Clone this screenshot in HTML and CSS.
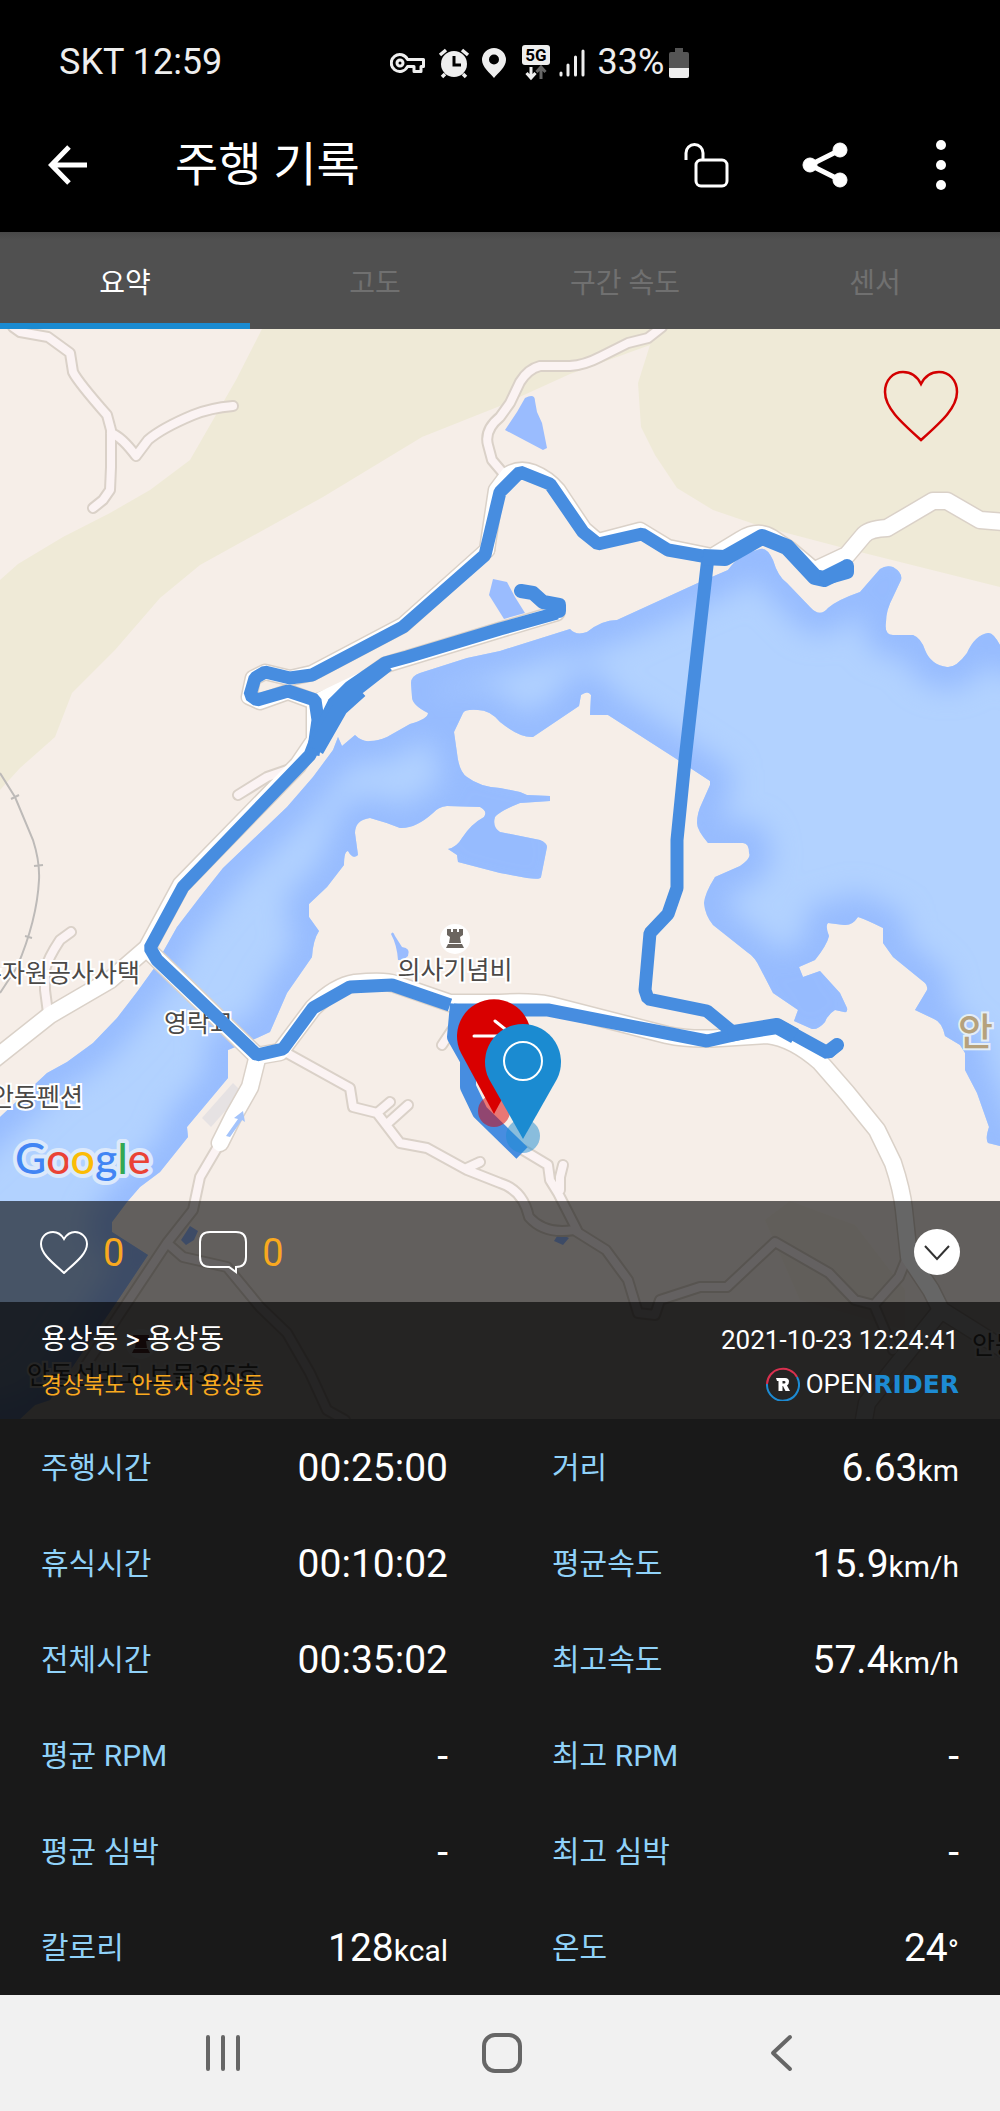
FILE: index.html
```html
<!DOCTYPE html>
<html lang="ko">
<head>
<meta charset="utf-8">
<meta name="viewport" content="width=device-width, initial-scale=1">
<title>주행 기록</title>
<link rel="stylesheet" href="styles.css">
</head>
<body>
<div class="status">
  <span class="carrier">SKT 12:59</span>
  <div class="status-icons">
    <svg width="36" height="24" viewBox="0 0 36 24" fill="none" stroke="#eee" stroke-width="3"><path d="M17.500 8.500H33.500V15.500H31V20.500H24V15.500H17.500A8.500 8.500 0 1 1 17.500 8.500Z" stroke-linejoin="round"/><circle cx="10" cy="12" r="3"/></svg>
    <svg width="32" height="32" viewBox="0 0 32 32"><circle cx="16" cy="17" r="13" fill="#eee"/><path d="M2 8L8 3M30 8L24 3M7 27L4 30M25 27L28 30" stroke="#eee" stroke-width="3.500"/><path d="M16 9V18H23" fill="none" stroke="#000" stroke-width="3"/></svg>
    <svg class="pin-icon" width="24" height="30" viewBox="0 0 24 30"><path fill="#eee" fill-rule="evenodd" d="M12 0A12 12 0 0 1 24 12C24 19 16 25 12 30C8 25 0 19 0 12A12 12 0 0 1 12 0ZM12 6.500A5 5 0 1 0 12 16.500A5 5 0 1 0 12 6.500Z"/></svg>
    <svg class="net-icon" width="28" height="36" viewBox="0 0 28 36"><rect width="28" height="20" rx="3" fill="#eee"/><text x="14" y="16" text-anchor="middle" class="net-text">5G</text><path d="M9 22V32M4.500 28L9 33L13.500 28" fill="none" stroke="#eee" stroke-width="3"/><path d="M19 34V24M14.500 27L19 22L23.500 27" fill="none" stroke="#666" stroke-width="3"/></svg>
    <svg width="28" height="30" viewBox="0 0 28 30" stroke="#eee" stroke-width="3" stroke-linecap="round"><path d="M3 27V25M10 27V17M17.500 27V9M25 27V3"/></svg>
    <span class="battery-text">33%</span>
    <svg width="20" height="30" viewBox="0 0 20 30"><path d="M6 0H14V4H18Q20 4 20 6V20H0V6Q0 4 2 4H6Z" fill="#555"/><path d="M0 20H20V28Q20 30 18 30H2Q0 30 0 28Z" fill="#eee"/></svg>
  </div>
</div>

<header class="appbar">
  <button class="icon-btn" aria-label="뒤로"><svg width="40" height="40" viewBox="0 0 40 40" fill="none" stroke="#fff" stroke-width="5"><path d="M39 20H4M21 2L3.500 20L21 38"/></svg></button>
  <h1>주행 기록</h1>
  <button class="icon-btn" aria-label="잠금 해제"><svg width="46" height="46" viewBox="0 0 46 46" fill="none" stroke="#fff" stroke-width="3"><rect x="12" y="18" width="31" height="26" rx="5"/><path d="M2 18V11A8.500 8.500 0 0 1 19 11V18"/></svg></button>
  <button class="icon-btn" aria-label="공유"><svg width="46" height="46" viewBox="0 0 46 46" fill="#fff" stroke="#fff"><path d="M38 8L8 23L38 38" fill="none" stroke-width="5"/><circle cx="8" cy="23" r="7"/><circle cx="38" cy="8" r="7"/><circle cx="38" cy="38" r="7"/></svg></button>
  <button class="icon-btn" aria-label="더보기"><svg width="10" height="50" viewBox="0 0 10 50" fill="#fff"><circle cx="5" cy="5" r="5"/><circle cx="5" cy="25" r="5"/><circle cx="5" cy="45" r="5"/></svg></button>
</header>

<nav class="tabs" role="tablist">
  <button class="tab active" role="tab" aria-selected="true">요약</button>
  <button class="tab" role="tab" aria-selected="false">고도</button>
  <button class="tab" role="tab" aria-selected="false">구간 속도</button>
  <button class="tab" role="tab" aria-selected="false">센서</button>
</nav>

<main>
<section class="map">
  <svg class="map-canvas" viewBox="0 329 1000 1090">
    <defs>
      <path id="lake" d="M-80 1190L0 1117L47 1073L67 1062L93 1043L117 1018L137 992L155 967L163 952L177 927L200 897L223 868L287 807L313 777L333 750L338 737L342 746L355 735Q362 742 370 741Q378 741 387 737L410 724Q428 719 428 713Q412 705 412 697L411 683Q411 676 420 673L467 658L500 651L570 629Q576 636 587 632Q602 620 617 620L700 582L728 570Q738 555 760 549Q767 547 773 560Q778 577 787 583L810 607Q820 618 828 608Q837 600 860 592L880 569Q886 565 893 567Q903 573 901 580L893 597Q886 610 886 622Q884 635 893 635L913 635Q921 638 925 650Q931 665 947 667Q956 668 967 653Q975 635 988 633Q993 632 1000 645L1100 700V1180L1000 1146L988 1143Q985 1139 989 1127L977 1093L965 1070V1053L960 1045L945 1036Q942 1022 934 1019L915 1010L927 990Q928 986 925 983L893 957L883 943V928Q867 920 858 917Q852 926 844 925L828 923Q825 926 829 936Q827 945 815 960L799 967L803 977L820 971L840 993L847 1008Q848 1013 844 1012L835 1010Q828 1014 825 1022Q818 1030 812 1029L794 1021L798 1010L773 993L760 968Q755 957 747 952L713 925Q705 915 704 903Q705 893 715 877L740 866Q752 858 749 853Q749 843 743 843H708Q697 830 697 823Q697 813 702 803L710 785V781L678 760L608 715H590L591 695Q588 690 581 695L579 706L533 737Q520 738 500 722Q490 710 478 710Q465 709 463 713L454 732L457 753Q459 772 467 777Q480 787 500 788L520 792L527 795L550 796V801L520 803Q500 811 495 817Q492 827 500 832L540 840Q547 843 547 847L541 877Q541 880 527 878L500 873L458 862L457 855L448 849Q457 847 462 838Q471 824 484 817Q488 811 480 807L447 806Q438 807 433 813Q415 829 400 828Q385 822 370 818Q355 820 355 833L358 855Q353 860 348 851Q344 851 344 865L327 887L309 904V917L319 931Q313 940 312 957L287 993L270 1032L257 1038L228 1050V1078L187 1127L188 1137L160 1172L140 1187L127 1202L112 1222V1232L148 1255L120 1297L86 1347L50 1400L35 1405L20 1419H-80Z"/>
      <clipPath id="lake-clip"><use href="#lake"/></clipPath>
      <filter id="soft" x="-10%" y="-10%" width="120%" height="120%"><feGaussianBlur stdDeviation="14"/></filter>
      <g id="lanes">
        <path d="M13 327L20 332L48 337L70 353L73 372Q78 382 107 415L111 430V467L110 490L103 500L93 508M111 433Q122 437 136 456L148 440Q162 428 193 415Q210 408 233 406"/>
        <path d="M662 327L648 338L628 343L600 357Q585 365 570 366H540Q528 369 520 382L510 403L500 417Q484 430 488 445L492 460L503 473"/>
        <path d="M48 1013L45 990V970Q48 958 60 940L71 932M238 795L267 777L293 768M442 1045L452 1030"/>
        <path d="M220 1143L200 1177L193 1210L167 1243L127 1303L86 1365M167 1243L183 1257L227 1267L260 1307L287 1333L310 1373L327 1410L345 1420"/>
        <path d="M285 1052L350 1088L353 1107L377 1113L400 1143L427 1148L467 1170L500 1183Q523 1190 529 1217Q545 1235 574 1230L606 1250L628 1280L638 1313L655 1315L660 1300L700 1287H727L775 1242L829 1273L855 1300L874 1305L899 1277L908 1255M874 1305L886 1333L893 1350M377 1113L390 1102M388 1123L408 1105M467 1168L480 1162"/>
        <path d="M523 1150L548 1165L550 1180L558 1193L577 1230M560 1190V1177L563 1165"/>
      </g>
      <g id="route-roads">
        <path d="M487 550L496 490L508 474Q520 467 533 472Q548 478 558 490L584 529L598 541L640 530L668 547L712 556L740 539Q758 528 772 537L790 549L815 570"/>
        <path d="M487 550L403 625L312 673L290 678L265 672L253 678L249 697L260 702L288 692L315 702L350 690L385 665L500 630L557 613"/>
      </g>
      <g id="roads">
        <path d="M815 570L847 555L863 536Q868 529 887 528L933 501H947L980 520L1005 522"/>
        <path d="M315 705V740L298 765L181 885L147 948L110 980L50 1015L-8 1061M150 952L257 1056L280 1052L313 1008Q335 986 355 983Q385 980 395 984L450 1003H500Q530 1001 550 1005L667 1035Q690 1040 720 1038L767 1035Q793 1038 820 1062L847 1093L877 1130L893 1163Q902 1190 904 1210L909 1257L931 1290L941 1310L893 1370L867 1403L863 1425M941 1310L957 1320L1005 1350"/>
        <path d="M258 1055L250 1087L233 1117L220 1143"/>
      </g>
    </defs>

    <rect y="329" width="1000" height="1090" fill="#f6eee8"/>
    <g fill="#efead7">
      <path d="M262 329L236 380L213 420L190 460L150 490L110 513L63 537L18 564L0 580V790L20 768L55 737L72 693L115 650L160 598L200 565L323 497L422 437L500 406L570 374L650 345L660 329Z"/>
      <path d="M655 329L650 345L638 383L641 427L655 455L677 488L713 510L760 526L840 547L1000 587V329Z"/>
    </g>
    <path d="M790 1201L855 1225L905 1290V1330L800 1300L765 1220Z" fill="#f3ece1"/>
    <g fill="#9abcfe">
      <path d="M505 430L517 412L525 398Q535 393 535 401L537 412L542 423L547 448L543 450Z"/>
      <path d="M493 579L489 595L504 619L525 613L515 597L507 582Z"/>
      <path d="M391 934Q393 930 395 936L402 947Q411 948 408 956L403 960H398Q397 945 391 934Z"/>
      <path d="M190 1226L198 1231L194 1240L186 1245L181 1240ZM559 1233L569 1238L563 1245L554 1241Z"/>
    </g>
    <use href="#lake" fill="#b2d2ff"/>
    <g clip-path="url(#lake-clip)"><use href="#lake" fill="none" stroke="#96bbfe" stroke-width="44" filter="url(#soft)"/></g>
    <path d="M202 1118L233 1083L242 1092L211 1127Z" fill="#e6e2e3"/>

    <g fill="none" stroke="#bdbab8" stroke-width="2"><path d="M0 773L15 797L33 840Q40 862 39 880Q37 920 17 967L0 993M11 799L19 795M34 866L43 865M25 936L32 938"/></g>
    <g fill="none" stroke-linejoin="round" stroke-linecap="round">
      <use href="#lanes" stroke="#dad1c8" stroke-width="12"/>
      <use href="#route-roads" stroke="#dad1c8" stroke-width="17"/>
      <use href="#roads" stroke="#dad1c8" stroke-width="19"/>
      <use href="#lanes" stroke="#fbf3f3" stroke-width="8"/>
      <use href="#route-roads" stroke="#fff" stroke-width="14"/>
      <use href="#roads" stroke="#fff" stroke-width="16"/>
    </g>
    <path d="M315 694L365 670L345 700L325 720Z" fill="#fff"/>
    <path d="M226 1136L238 1119L234 1118L243 1111L245 1122L242 1120L230 1137Z" fill="#a4c4fb"/>

    <g class="place">
      <text x="140" y="982" text-anchor="end">수자원공사사택</text>
      <text x="164" y="1032">영락교</text>
      <text x="83" y="1106" text-anchor="end">안동펜션</text>
      <text x="455" y="979" text-anchor="middle">의사기념비</text>
      <text x="27" y="1384">안동선비고 보물305호</text>
      <text x="972" y="1354">안동</text>
    </g>
    <text class="region" x="958" y="1045">안</text>
    <g><circle cx="455" cy="939" r="15" fill="#fff"/><path fill="#6b655f" d="M447 929H451V932H453V929H457V932H459V929H463V935L460 937L461 943H449L450 937L447 935ZM448 944H462L464 948H446Z"/></g>
    <g><circle cx="141" cy="1344" r="15" fill="#fff"/><path fill="#743b35" d="M133 1335H149V1341H146L147 1348H135L136 1341H133ZM134 1349H148L150 1353H132Z"/></g>

    <g fill="none" stroke="#478de0" stroke-width="13" stroke-linejoin="bevel">
      <path d="M708 557L668 550L642 534L598 544L583 532L550 484L520 472L500 492L485 555L403 627L312 675L290 678L265 672L255 678L250 695L257 700L288 691L315 700L318 720L313 755"/>
      <path d="M557 613L500 629L407 657L385 663L350 687L334 703L317 737L310 755L183 887L150 948L157 960L257 1055L283 1049L313 1008L350 987L392 985L450 1005"/>
      <path d="M454 1010H548L707 1041L777 1025L828 1053L837 1045"/>
      <path d="M735 1034L707 1011L648 999L645 990L650 933L668 914L677 888V840L685 760L708 557"/>
    </g>
    <g fill="none" stroke="#478de0" stroke-width="16" stroke-linejoin="round">
      <path d="M703 557L725 558L762 537L787 547L815 577L824 579L846 568"/>
      <path d="M333 706L350 693L387 664M316 750L340 708L360 690"/>
      <path d="M458 1004L455 1037L468 1060V1087L480 1112L522 1153"/>
      <path d="M728 1034L777 1026L795 1036"/>
    </g>
    <g fill="none" stroke="#478de0" stroke-width="14" stroke-linecap="round" stroke-linejoin="round"><path d="M521 591L533 593L543 602L559 605V611M826 578L847 572V566M829 1051L837 1045"/></g>

    <circle cx="494" cy="1111" r="16" fill="#dc0000" opacity=".5"/>
    <path d="M494 1114L461 1053A37 37 0 1 1 527 1053Z" fill="#d90000"/>
    <path d="M474 1036H514L495 1021" fill="none" stroke="#fff" stroke-width="3" stroke-linecap="round"/>
    <circle cx="523" cy="1136" r="17" fill="#1b8bd1" opacity=".5"/>
    <path d="M523 1139L489 1079A38 38 0 1 1 557 1079Z" fill="#1b8bd1"/>
    <circle cx="523" cy="1061" r="19" fill="none" stroke="#fff" stroke-width="2"/>

    <text class="google" x="15" y="1174"><tspan fill="#4285f4">G</tspan><tspan fill="#ea4335">o</tspan><tspan fill="#fbbc05">o</tspan><tspan fill="#4285f4">g</tspan><tspan fill="#34a853">l</tspan><tspan fill="#ea4335">e</tspan></text>
  </svg>

  <button class="icon-btn favorite" aria-label="즐겨찾기"><svg width="76" height="72" viewBox="0 0 76 72" fill="none" stroke="#d30000" stroke-width="2.500"><path d="M38 14C34 6 27 2 20 2C10 2 2 10 2 22C2 38 18 52 38 70C58 52 74 38 74 22C74 10 66 2 56 2C49 2 42 6 38 14Z"/></svg></button>

  <div class="overlay">
    <div class="social">
      <button class="count"><svg width="48" height="44" viewBox="0 0 48 44" fill="none" stroke="#fff" stroke-width="2"><path d="M24 9C21 4 17 2 13 2C6 2 1 7 1 14C1 24 13 33 24 43C35 33 47 24 47 14C47 7 41 2 35 2C30 2 27 4 24 9Z"/></svg><span>0</span></button>
      <button class="count"><svg width="48" height="44" viewBox="0 0 48 44" fill="none" stroke="#fff" stroke-width="2"><path d="M11 2H37Q47 2 47 12V27Q47 37 37 37V42L30 37H11Q1 37 1 27V12Q1 2 11 2Z"/></svg><span>0</span></button>
      <button class="icon-btn collapse" aria-label="접기"><svg width="46" height="46" viewBox="0 0 46 46" fill="none"><circle cx="23" cy="23" r="23" fill="#fff"/><path d="M11 17L23 30L35 17" stroke="#333" stroke-width="2"/></svg></button>
    </div>
    <div class="info">
      <div>
        <p class="route">용상동 &gt; 용상동</p>
        <p class="address">경상북도 안동시 용상동</p>
      </div>
      <div class="info-right">
        <p class="date">2021-10-23 12:24:41</p>
        <p class="brand"><svg width="34" height="34" viewBox="0 0 34 34" fill="none" stroke-width="2"><path d="M1 17A16 16 0 0 1 31 10" stroke="#d9304f"/><path d="M31 10A16 16 0 1 1 1 17" stroke="#1d8bd3"/><path d="M10 11H19Q23 11 23 14.500Q23 17.500 21 18.500L24 24H19.500L17 19H16.500V24H12.500V14H11ZM16.500 14V16.500H18Q19.500 16.500 19.500 15.200Q19.500 14 18 14Z" fill="#fff" fill-rule="evenodd"/></svg><span>OPEN</span><b>RIDER</b></p>
      </div>
    </div>
  </div>
</section>

<dl class="stats">
  <div><dt>주행시간</dt><dd>00:25:00</dd></div>
  <div><dt>거리</dt><dd>6.63<small>km</small></dd></div>
  <div><dt>휴식시간</dt><dd>00:10:02</dd></div>
  <div><dt>평균속도</dt><dd>15.9<small>km/h</small></dd></div>
  <div><dt>전체시간</dt><dd>00:35:02</dd></div>
  <div><dt>최고속도</dt><dd>57.4<small>km/h</small></dd></div>
  <div><dt>평균 RPM</dt><dd>-</dd></div>
  <div><dt>최고 RPM</dt><dd>-</dd></div>
  <div><dt>평균 심박</dt><dd>-</dd></div>
  <div><dt>최고 심박</dt><dd>-</dd></div>
  <div><dt>칼로리</dt><dd>128<small>kcal</small></dd></div>
  <div><dt>온도</dt><dd>24<small>°</small></dd></div>
</dl>
</main>

<footer class="sysnav">
  <button class="icon-btn" aria-label="최근 앱"><svg width="36" height="38" viewBox="0 0 36 38" stroke="#666" stroke-width="4" stroke-linecap="round"><path d="M3 3V35M18 3V35M33 3V35"/></svg></button>
  <button class="icon-btn" aria-label="홈"><svg width="40" height="40" viewBox="0 0 40 40" fill="none" stroke="#666" stroke-width="4"><rect x="2" y="2" width="36" height="36" rx="11"/></svg></button>
  <button class="icon-btn" aria-label="뒤로"><svg width="24" height="38" viewBox="0 0 24 38" fill="none" stroke="#666" stroke-width="4" stroke-linecap="round" stroke-linejoin="round"><path d="M21 3L4 19L21 35"/></svg></button>
</footer>
</body>
</html>
```

FILE: styles.css
```css
* { box-sizing: border-box; }

body {
  margin: 0;
  background: #000;
  color: #fff;
  font-family: Roboto, "Noto Sans CJK KR", sans-serif;
}

button {
  border: 0;
  padding: 0;
  background: none;
  color: inherit;
  font: inherit;
}

svg { display: block; flex: none; }
p, h1, dl, dd { margin: 0; }

/* status bar */
.status {
  display: grid;
  grid-template-columns: 33% 1fr;
  align-items: center;
  padding: 42px 0 14px 59px;
  color: #eee;
  font-size: 36px;
  line-height: 41px;
}
.status-icons { display: flex; align-items: center; padding-left: 20px; }
.status-icons svg { margin-right: 12px; }
.status-icons .pin-icon { margin-right: 16px; }
.status-icons .net-icon { margin-right: 8px; }
.battery-text { margin-right: 5px; }
.net-text { font: bold 17px Roboto, sans-serif; fill: #000; }

/* title bar */
.appbar {
  display: flex;
  align-items: center;
  height: 135px;
  padding: 0 54px 0 48px;
}
.appbar h1 {
  flex: 1;
  margin-left: 87px;
  font-size: 47px;
  font-weight: 400;
  line-height: 60px;
}
.appbar .icon-btn + .icon-btn { margin-left: 72px; }
.appbar .icon-btn:last-child { margin-left: 88px; }

/* tabs */
.tabs {
  display: grid;
  grid-template-columns: repeat(4, 1fr);
  background: linear-gradient(#484848, #505050 8px);
}
.tab {
  height: 97px;
  color: #707070;
  font-size: 28px;
}
.tab.active {
  color: #fff;
  box-shadow: inset 0 -6px #1b8bd1;
}

/* map and the panels laid over it */
.map { display: grid; }
.map > * { grid-area: 1 / 1; }
.map-canvas { width: 100%; height: auto; }
.favorite { align-self: start; justify-self: end; margin: 41px 41px 0 0; }
.place text {
  fill: #4b4947;
  stroke: #fff;
  stroke-width: 4px;
  paint-order: stroke;
  font: 25px "Noto Sans CJK KR", sans-serif;
}
.region {
  fill: #b5a17c;
  stroke: #e4eef5;
  stroke-width: 4px;
  paint-order: stroke;
  font: 500 38px "Noto Sans CJK KR", sans-serif;
}
.google {
  stroke: #dce9fb;
  stroke-width: 8px;
  stroke-linejoin: round;
  paint-order: stroke;
  font: 500 43px Lato, sans-serif;
}
.overlay { align-self: end; }
.social {
  display: flex;
  align-items: center;
  gap: 75px;
  height: 101px;
  padding: 0 40px;
  background: rgba(0, 0, 0, .6);
}
.count {
  display: flex;
  align-items: center;
  gap: 15px;
  color: #f9a91f;
  font-size: 38px;
}
.count span { padding-top: 3px; }
.collapse { margin-left: auto; }
.info {
  display: flex;
  justify-content: space-between;
  padding: 20px 41px 15px;
  background: rgba(0, 0, 0, .85);
}
.info p { height: 36px; line-height: 36px; }
.info p + p { margin-top: 10px; }
.route { font-size: 28px; }
.address { color: #f9a91f; font-size: 23px; }
.date { font-size: 26px; text-align: right; }
.info .brand {
  display: flex;
  align-items: center;
  justify-content: flex-end;
  margin-top: 8px;
  font-size: 26px;
}
.brand svg { margin-right: 6px; }
.brand b { color: #1d8bd3; font: bold 25px "DejaVu Sans", sans-serif; }

/* ride figures */
.stats {
  display: grid;
  grid-template-columns: 1fr 1fr;
  column-gap: 104px;
  padding: 0 41px;
  background: #191919;
}
.stats div {
  display: flex;
  align-items: center;
  justify-content: space-between;
  height: 96px;
}
.stats dt { padding-bottom: 4px; color: #90d2f9; font-size: 30px; }
.stats dd { padding-top: 2px; font-size: 39px; }
.stats small { font-size: 30px; }

/* system navigation */
.sysnav {
  display: grid;
  grid-template-columns: repeat(3, 1fr);
  justify-items: center;
  align-items: center;
  height: 116px;
  padding: 0 80px 0 84px;
  background: #f1f1f1;
}
```
